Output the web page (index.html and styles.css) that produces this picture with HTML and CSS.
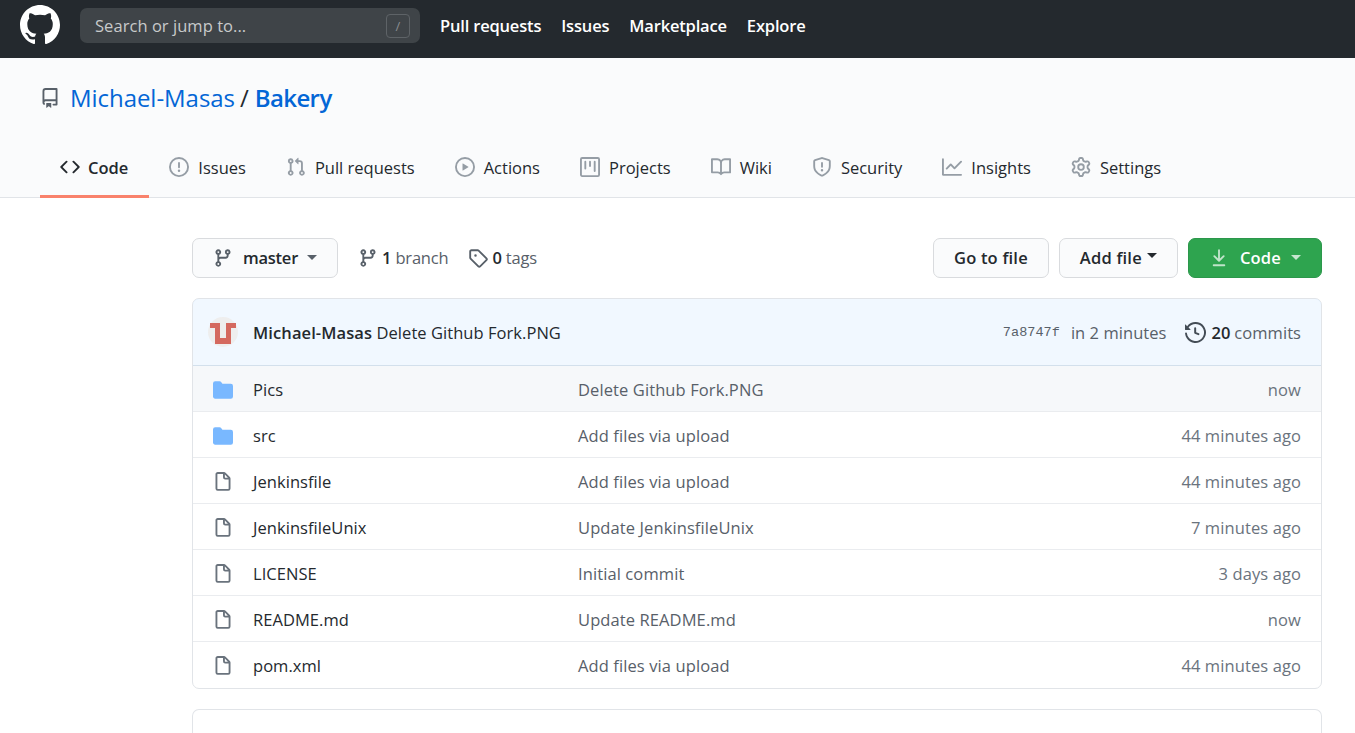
FILE: index.html
```html
<!DOCTYPE html>
<html lang="en">
<head>
    <meta charset="UTF-8">
    <meta name="viewport" content="width=device-width, initial-scale=1.0">
    <title>Michael-Masas/Bakery</title>
    <link rel="stylesheet" href="styles.css">
</head>
<body>

    <header class="topbar">
        <svg class="logo" viewBox="0 0 16 16"><path fill-rule="evenodd" d="M8 0C3.58 0 0 3.58 0 8c0 3.54 2.29 6.53 5.47 7.59.4.07.55-.17.55-.38 0-.19-.01-.82-.01-1.49-2.01.37-2.53-.49-2.69-.94-.09-.23-.48-.94-.82-1.13-.28-.15-.68-.52-.01-.53.63-.01 1.08.58 1.23.82.72 1.21 1.87.87 2.33.66.07-.52.28-.87.51-1.07-1.78-.2-3.64-.89-3.64-3.95 0-.87.31-1.59.82-2.15-.08-.2-.36-1.02.08-2.12 0 0 .67-.21 2.2.82.64-.18 1.32-.27 2-.27.68 0 1.36.09 2 .27 1.53-1.04 2.2-.82 2.2-.82.44 1.1.16 1.92.08 2.12.51.56.82 1.27.82 2.15 0 3.07-1.87 3.75-3.65 3.95.29.25.54.73.54 1.48 0 1.07-.01 1.93-.01 2.2 0 .21.15.46.55.38A8.013 8.013 0 0016 8c0-4.42-3.58-8-8-8z"/></svg>
        <div class="search">
            <span>Search or jump to...</span>
            <kbd class="slash">/</kbd>
        </div>
        <nav class="topnav">
            <a>Pull requests</a>
            <a>Issues</a>
            <a>Marketplace</a>
            <a>Explore</a>
        </nav>
    </header>

    <section class="pagehead">
        <h1 class="repo-title">
            <svg class="icon repo-icon" viewBox="0 0 16 16"><path fill-rule="evenodd" d="M2 2.5A2.5 2.5 0 014.5 0h8.75a.75.75 0 01.75.75v12.5a.75.75 0 01-.75.75h-2.5a.75.75 0 110-1.5h1.75v-2h-8a1 1 0 00-.714 1.7.75.75 0 01-1.072 1.05A2.495 2.495 0 012 11.5v-9zm10.5-1V9h-8c-.356 0-.694.074-1 .208V2.5a1 1 0 011-1h8zM5 12.25v3.25a.25.25 0 00.4.2l1.45-1.087a.25.25 0 01.3 0L8.6 15.7a.25.25 0 00.4-.2v-3.25a.25.25 0 00-.25-.25h-3.5a.25.25 0 00-.25.25z"/></svg>
            <a class="owner">Michael-Masas</a>
            <span class="sep">/</span>
            <a class="name">Bakery</a>
        </h1>
        <nav class="tabs">
            <a class="tab selected"><svg class="icon" viewBox="0 0 16 16"><path fill-rule="evenodd" d="M4.72 3.22a.75.75 0 011.06 1.06L2.06 8l3.72 3.72a.75.75 0 11-1.06 1.06L.47 8.53a.75.75 0 010-1.06l4.25-4.25zm6.56 0a.75.75 0 10-1.06 1.06L13.94 8l-3.72 3.72a.75.75 0 101.06 1.06l4.25-4.25a.75.75 0 000-1.06l-4.25-4.25z"/></svg>Code</a>
            <a class="tab"><svg class="icon" viewBox="0 0 16 16"><path fill-rule="evenodd" d="M8 1.5a6.5 6.5 0 100 13 6.5 6.5 0 000-13zM0 8a8 8 0 1116 0A8 8 0 010 8zm9 3a1 1 0 11-2 0 1 1 0 012 0zm-.25-6.25a.75.75 0 00-1.5 0v3.5a.75.75 0 001.5 0v-3.5z"/></svg>Issues</a>
            <a class="tab"><svg class="icon" viewBox="0 0 16 16"><path fill-rule="evenodd" d="M7.177 3.073L9.573.677A.25.25 0 0110 .854v4.792a.25.25 0 01-.427.177L7.177 3.427a.25.25 0 010-.354zM3.75 2.5a.75.75 0 100 1.5.75.75 0 000-1.5zm-2.25.75a2.25 2.25 0 113 2.122v5.256a2.251 2.251 0 11-1.5 0V5.372A2.25 2.25 0 011.5 3.25zM11 2.5h-1V4h1a1 1 0 011 1v5.628a2.251 2.251 0 101.5 0V5A2.5 2.5 0 0011 2.5zm1 10.25a.75.75 0 111.5 0 .75.75 0 01-1.5 0zM3.75 12a.75.75 0 100 1.5.75.75 0 000-1.5z"/></svg>Pull requests</a>
            <a class="tab"><svg class="icon" viewBox="0 0 16 16"><path fill-rule="evenodd" d="M1.5 8a6.5 6.5 0 1113 0 6.5 6.5 0 01-13 0zM8 0a8 8 0 100 16A8 8 0 008 0zM6.379 5.227A.25.25 0 006 5.442v5.117a.25.25 0 00.379.214l4.264-2.559a.25.25 0 000-.428L6.379 5.227z"/></svg>Actions</a>
            <a class="tab"><svg class="icon" viewBox="0 0 16 16"><path fill-rule="evenodd" d="M1.75 0A1.75 1.75 0 000 1.75v12.5C0 15.216.784 16 1.75 16h12.5A1.75 1.75 0 0016 14.25V1.75A1.75 1.75 0 0014.25 0H1.75zM1.5 1.75a.25.25 0 01.25-.25h12.5a.25.25 0 01.25.25v12.5a.25.25 0 01-.25.25H1.75a.25.25 0 01-.25-.25V1.75zM11.75 3a.75.75 0 00-.75.75v7.5a.75.75 0 001.5 0v-7.5a.75.75 0 00-.75-.75zm-8.25.75a.75.75 0 011.5 0v5.5a.75.75 0 01-1.5 0v-5.5zM8 3a.75.75 0 00-.75.75v3.5a.75.75 0 001.5 0v-3.5A.75.75 0 008 3z"/></svg>Projects</a>
            <a class="tab"><svg class="icon" viewBox="0 0 16 16"><path fill-rule="evenodd" d="M0 1.75A.75.75 0 01.75 1h4.253c1.227 0 2.317.59 3 1.501A3.744 3.744 0 0111.006 1h4.245a.75.75 0 01.75.75v10.5a.75.75 0 01-.75.75h-4.507a2.25 2.25 0 00-1.591.659l-.622.621a.75.75 0 01-1.06 0l-.622-.621A2.25 2.25 0 005.258 13H.75a.75.75 0 01-.75-.75V1.75zm8.755 3a2.25 2.25 0 012.25-2.25H14.5v9h-3.757c-.71 0-1.4.201-1.992.572l.004-7.322zm-1.504 7.324l.004-5.073-.002-2.253A2.25 2.25 0 005.003 2.5H1.5v9h3.757a3.75 3.75 0 011.994.574z"/></svg>Wiki</a>
            <a class="tab"><svg class="icon" viewBox="0 0 16 16"><path fill-rule="evenodd" d="M7.467.133a1.75 1.75 0 011.066 0l5.25 1.68A1.75 1.75 0 0115 3.48V7c0 1.566-.32 3.182-1.303 4.682-.983 1.498-2.585 2.813-5.032 3.855a1.7 1.7 0 01-1.33 0c-2.447-1.042-4.049-2.357-5.032-3.855C1.32 10.182 1 8.566 1 7V3.48a1.75 1.75 0 011.217-1.667l5.25-1.68zm.61 1.429a.25.25 0 00-.153 0l-5.25 1.68a.25.25 0 00-.174.238V7c0 1.358.275 2.666 1.057 3.86.784 1.194 2.121 2.34 4.366 3.297a.2.2 0 00.154 0c2.245-.956 3.582-2.104 4.366-3.298C13.225 9.666 13.5 8.36 13.5 7V3.48a.25.25 0 00-.174-.237l-5.25-1.68zM9 10.5a1 1 0 11-2 0 1 1 0 012 0zm-.25-5.75a.75.75 0 10-1.5 0v3a.75.75 0 001.5 0v-3z"/></svg>Security</a>
            <a class="tab"><svg class="icon" viewBox="0 0 16 16"><path fill-rule="evenodd" d="M1.5 1.75a.75.75 0 00-1.5 0v12.5c0 .414.336.75.75.75h14.5a.75.75 0 000-1.5H1.5V1.75zm14.28 2.53a.75.75 0 00-1.06-1.06L10 7.94 7.53 5.47a.75.75 0 00-1.06 0L3.22 8.72a.75.75 0 001.06 1.06L7 7.06l2.47 2.47a.75.75 0 001.06 0l5.25-5.25z"/></svg>Insights</a>
            <a class="tab"><svg class="icon" viewBox="0 0 16 16"><path fill-rule="evenodd" d="M7.429 1.525a6.593 6.593 0 011.142 0c.036.003.108.036.137.146l.289 1.105c.147.56.55.967.997 1.189.174.086.341.183.501.29.417.278.97.423 1.53.27l1.102-.303c.11-.03.175.016.195.046.219.31.41.641.573.989.014.031.022.11-.059.19l-.815.806c-.411.406-.562.957-.53 1.456a4.588 4.588 0 010 .582c-.032.499.119 1.05.53 1.456l.815.806c.08.08.073.159.059.19a6.494 6.494 0 01-.573.99c-.02.029-.086.074-.195.045l-1.103-.303c-.559-.153-1.112-.008-1.529.27-.16.107-.327.204-.5.29-.449.222-.851.628-.998 1.189l-.289 1.105c-.029.11-.101.143-.137.146a6.613 6.613 0 01-1.142 0c-.036-.003-.108-.037-.137-.146l-.289-1.105c-.147-.56-.55-.967-.997-1.189a4.502 4.502 0 01-.501-.29c-.417-.278-.97-.423-1.53-.27l-1.102.303c-.11.03-.175-.016-.195-.046a6.492 6.492 0 01-.573-.989c-.014-.031-.022-.11.059-.19l.815-.806c.411-.406.562-.957.53-1.456a4.587 4.587 0 010-.582c.032-.499-.119-1.05-.53-1.456l-.815-.806c-.08-.08-.073-.159-.059-.19a6.44 6.44 0 01.573-.99c.02-.029.086-.075.195-.045l1.103.303c.559.153 1.112.008 1.529-.27.16-.107.327-.204.5-.29.449-.222.851-.628.998-1.189l.289-1.105c.029-.11.101-.143.137-.146zM8 0c-.236 0-.47.01-.701.03-.743.065-1.29.615-1.458 1.261l-.29 1.106c-.017.066-.078.158-.211.224a5.994 5.994 0 00-.668.386c-.123.082-.233.09-.3.071L3.27 2.776c-.644-.177-1.392.02-1.82.63a7.977 7.977 0 00-.704 1.217c-.315.675-.111 1.422.363 1.891l.815.806c.05.048.098.147.088.294a6.084 6.084 0 000 .772c.01.147-.038.246-.088.294l-.815.806c-.474.469-.678 1.216-.363 1.891.2.428.436.835.704 1.218.428.609 1.176.806 1.82.63l1.103-.303c.066-.019.176-.011.299.071.213.143.436.272.668.386.133.066.194.158.212.224l.289 1.106c.169.646.715 1.196 1.458 1.26a8.094 8.094 0 001.402 0c.743-.064 1.29-.614 1.458-1.26l.29-1.106c.017-.066.078-.158.211-.224a5.98 5.98 0 00.668-.386c.123-.082.233-.09.3-.071l1.102.302c.644.177 1.392-.02 1.82-.63.268-.382.505-.789.704-1.217.315-.675.111-1.422-.364-1.891l-.814-.806c-.05-.048-.098-.147-.088-.294a6.1 6.1 0 000-.772c-.01-.147.039-.246.088-.294l.814-.806c.475-.469.679-1.216.364-1.891a7.992 7.992 0 00-.704-1.218c-.428-.609-1.176-.806-1.82-.63l-1.103.303c-.066.019-.176.011-.299-.071a5.991 5.991 0 00-.668-.386c-.133-.066-.194-.158-.212-.224L10.16 1.29C9.99.645 9.444.095 8.701.031A8.094 8.094 0 008 0zm1.5 8a1.5 1.5 0 11-3 0 1.5 1.5 0 013 0zM11 8a3 3 0 11-6 0 3 3 0 016 0z"/></svg>Settings</a>
        </nav>
    </section>

    <main class="content">
        <div class="toolbar">
            <button class="btn branch-btn">
                <svg class="icon" viewBox="0 0 16 16"><path fill-rule="evenodd" d="M11.75 2.5a.75.75 0 100 1.5.75.75 0 000-1.5zm-2.25.75a2.25 2.25 0 113 2.122V6A2.5 2.5 0 0110 8.5H6a1 1 0 00-1 1v1.128a2.251 2.251 0 11-1.5 0V5.372a2.25 2.25 0 111.5 0v1.836A2.492 2.492 0 016 7h4a1 1 0 001-1v-.628A2.25 2.25 0 019.5 3.25zM4.25 12a.75.75 0 100 1.5.75.75 0 000-1.5zM3.5 3.25a.75.75 0 111.5 0 .75.75 0 01-1.5 0z"/></svg>
                <span>master</span>
                <i class="caret"></i>
            </button>
            <a class="meta-link"><svg class="icon" viewBox="0 0 16 16"><path fill-rule="evenodd" d="M11.75 2.5a.75.75 0 100 1.5.75.75 0 000-1.5zm-2.25.75a2.25 2.25 0 113 2.122V6A2.5 2.5 0 0110 8.5H6a1 1 0 00-1 1v1.128a2.251 2.251 0 11-1.5 0V5.372a2.25 2.25 0 111.5 0v1.836A2.492 2.492 0 016 7h4a1 1 0 001-1v-.628A2.25 2.25 0 019.5 3.25zM4.25 12a.75.75 0 100 1.5.75.75 0 000-1.5zM3.5 3.25a.75.75 0 111.5 0 .75.75 0 01-1.5 0z"/></svg><b>1</b> branch</a>
            <a class="meta-link"><svg class="icon" viewBox="0 0 16 16"><path fill-rule="evenodd" d="M2.5 7.775V2.75a.25.25 0 01.25-.25h5.025a.25.25 0 01.177.073l6.25 6.25a.25.25 0 010 .354l-5.025 5.025a.25.25 0 01-.354 0l-6.25-6.25a.25.25 0 01-.073-.177zm-1.5 0V2.75C1 1.784 1.784 1 2.75 1h5.025c.464 0 .91.184 1.238.513l6.25 6.25a1.75 1.75 0 010 2.474l-5.026 5.026a1.75 1.75 0 01-2.474 0l-6.25-6.25A1.75 1.75 0 011 7.775zM6 5a1 1 0 100 2 1 1 0 000-2z"/></svg><b>0</b> tags</a>
            <div class="toolbar-right">
                <button class="btn wide">Go to file</button>
                <button class="btn wide">Add file<i class="caret small"></i></button>
                <button class="btn wide primary">
                    <svg class="icon" viewBox="0 0 16 16"><path fill-rule="evenodd" d="M7.47 10.78a.75.75 0 001.06 0l3.75-3.75a.75.75 0 00-1.06-1.06L8.75 8.44V1.75a.75.75 0 00-1.5 0v6.69L4.78 5.97a.75.75 0 00-1.06 1.06l3.75 3.75zM3.75 13a.75.75 0 000 1.5h8.5a.75.75 0 000-1.5h-8.5z"/></svg>
                    <span>Code</span>
                    <i class="caret"></i>
                </button>
            </div>
        </div>

        <div class="files">
            <div class="commit-bar">
                <svg class="avatar" viewBox="0 0 30 30"><circle cx="15" cy="15" r="15" fill="#eeeeee"/><path fill="#d4695f" d="M2 6h10v15h6V6h10v5h-5v16H7V11H2z"/></svg>
                <span class="commit-msg"><b>Michael-Masas</b> Delete Github Fork.PNG</span>
                <code class="sha">7a8747f</code>
                <span class="commit-time">in 2 minutes</span>
                <span class="commits"><svg class="icon" viewBox="0 0 16 16"><path fill-rule="evenodd" d="M1.643 3.143L.427 1.927A.25.25 0 000 2.104V5.75c0 .138.112.25.25.25h3.646a.25.25 0 00.177-.427L2.715 4.215a6.5 6.5 0 11-1.18 4.458.75.75 0 10-1.493.154 8.001 8.001 0 101.6-5.684zM7.75 4a.75.75 0 01.75.75v2.992l2.028.812a.75.75 0 01-.557 1.392l-2.5-1A.75.75 0 017 8.25v-3.5A.75.75 0 017.75 4z"/></svg><b>20</b> commits</span>
            </div>
            <div class="row hover">
                <svg class="icon folder" viewBox="0 0 16 16"><path d="M1.75 1A1.75 1.75 0 000 2.75v10.5C0 14.216.784 15 1.75 15h12.5A1.75 1.75 0 0016 13.25v-8.5A1.75 1.75 0 0014.25 3h-6.5a.25.25 0 01-.2-.1l-.9-1.2c-.33-.44-.85-.7-1.4-.7h-3.5z"/></svg>
                <a class="fname">Pics</a><a class="fmsg">Delete Github Fork.PNG</a><span class="ftime">now</span>
            </div>
            <div class="row">
                <svg class="icon folder" viewBox="0 0 16 16"><path d="M1.75 1A1.75 1.75 0 000 2.75v10.5C0 14.216.784 15 1.75 15h12.5A1.75 1.75 0 0016 13.25v-8.5A1.75 1.75 0 0014.25 3h-6.5a.25.25 0 01-.2-.1l-.9-1.2c-.33-.44-.85-.7-1.4-.7h-3.5z"/></svg>
                <a class="fname">src</a><a class="fmsg">Add files via upload</a><span class="ftime">44 minutes ago</span>
            </div>
            <div class="row">
                <svg class="icon file" viewBox="0 0 16 16"><path fill-rule="evenodd" d="M3.75 1.5a.25.25 0 00-.25.25v11.5c0 .138.112.25.25.25h8.5a.25.25 0 00.25-.25V6H9.75A1.75 1.75 0 018 4.25V1.5H3.75zm5.75.56v2.19c0 .138.112.25.25.25h2.19L9.5 2.06zM2 1.75C2 .784 2.784 0 3.75 0h5.086c.464 0 .909.184 1.237.513l3.414 3.414c.329.328.513.773.513 1.237v8.086A1.75 1.75 0 0112.25 15h-8.5A1.75 1.75 0 012 13.25V1.75z"/></svg>
                <a class="fname">Jenkinsfile</a><a class="fmsg">Add files via upload</a><span class="ftime">44 minutes ago</span>
            </div>
            <div class="row">
                <svg class="icon file" viewBox="0 0 16 16"><path fill-rule="evenodd" d="M3.75 1.5a.25.25 0 00-.25.25v11.5c0 .138.112.25.25.25h8.5a.25.25 0 00.25-.25V6H9.75A1.75 1.75 0 018 4.25V1.5H3.75zm5.75.56v2.19c0 .138.112.25.25.25h2.19L9.5 2.06zM2 1.75C2 .784 2.784 0 3.75 0h5.086c.464 0 .909.184 1.237.513l3.414 3.414c.329.328.513.773.513 1.237v8.086A1.75 1.75 0 0112.25 15h-8.5A1.75 1.75 0 012 13.25V1.75z"/></svg>
                <a class="fname">JenkinsfileUnix</a><a class="fmsg">Update JenkinsfileUnix</a><span class="ftime">7 minutes ago</span>
            </div>
            <div class="row">
                <svg class="icon file" viewBox="0 0 16 16"><path fill-rule="evenodd" d="M3.75 1.5a.25.25 0 00-.25.25v11.5c0 .138.112.25.25.25h8.5a.25.25 0 00.25-.25V6H9.75A1.75 1.75 0 018 4.25V1.5H3.75zm5.75.56v2.19c0 .138.112.25.25.25h2.19L9.5 2.06zM2 1.75C2 .784 2.784 0 3.75 0h5.086c.464 0 .909.184 1.237.513l3.414 3.414c.329.328.513.773.513 1.237v8.086A1.75 1.75 0 0112.25 15h-8.5A1.75 1.75 0 012 13.25V1.75z"/></svg>
                <a class="fname">LICENSE</a><a class="fmsg">Initial commit</a><span class="ftime">3 days ago</span>
            </div>
            <div class="row">
                <svg class="icon file" viewBox="0 0 16 16"><path fill-rule="evenodd" d="M3.75 1.5a.25.25 0 00-.25.25v11.5c0 .138.112.25.25.25h8.5a.25.25 0 00.25-.25V6H9.75A1.75 1.75 0 018 4.25V1.5H3.75zm5.75.56v2.19c0 .138.112.25.25.25h2.19L9.5 2.06zM2 1.75C2 .784 2.784 0 3.75 0h5.086c.464 0 .909.184 1.237.513l3.414 3.414c.329.328.513.773.513 1.237v8.086A1.75 1.75 0 0112.25 15h-8.5A1.75 1.75 0 012 13.25V1.75z"/></svg>
                <a class="fname">README.md</a><a class="fmsg">Update README.md</a><span class="ftime">now</span>
            </div>
            <div class="row last">
                <svg class="icon file" viewBox="0 0 16 16"><path fill-rule="evenodd" d="M3.75 1.5a.25.25 0 00-.25.25v11.5c0 .138.112.25.25.25h8.5a.25.25 0 00.25-.25V6H9.75A1.75 1.75 0 018 4.25V1.5H3.75zm5.75.56v2.19c0 .138.112.25.25.25h2.19L9.5 2.06zM2 1.75C2 .784 2.784 0 3.75 0h5.086c.464 0 .909.184 1.237.513l3.414 3.414c.329.328.513.773.513 1.237v8.086A1.75 1.75 0 0112.25 15h-8.5A1.75 1.75 0 012 13.25V1.75z"/></svg>
                <a class="fname">pom.xml</a><a class="fmsg">Add files via upload</a><span class="ftime">44 minutes ago</span>
            </div>
        </div>

        <div class="readme"></div>
    </main>

</body>
</html>
```

FILE: styles.css
```css
html, body {
    height: 733px;
    overflow: hidden;
}

body {
    margin: 0;
    font-family: "Open Sans", "Noto Sans", sans-serif;
    font-size: 16.5px;
    letter-spacing: 0.05px;
    color: #24292e;
    background: #fff;
}

.icon {
    width: 20px;
    height: 20px;
    flex: none;
    fill: currentColor;
}

b {
    font-weight: 600;
    letter-spacing: 0;
}

/* top bar */
.topbar {
    display: flex;
    align-items: flex-start;
    height: 58px;
    box-sizing: border-box;
    padding: 8px 20px 0;
    background: #24292e;
    color: #fff;
}

.logo {
    width: 40px;
    height: 40px;
    margin: -3px 20px 0 0;
    fill: #fff;
}

.search {
    display: flex;
    align-items: center;
    justify-content: space-between;
    width: 340px;
    height: 35px;
    box-sizing: border-box;
    padding: 0 10px 0 15px;
    background: #3f4448;
    border-radius: 7px;
    color: #c8cacb;
}

.slash {
    width: 24px;
    height: 24px;
    box-sizing: border-box;
    border: 1px solid #5e6367;
    border-radius: 4px;
    font: 13px/22px "Open Sans", sans-serif;
    text-align: center;
    color: #8a8e91;
}

.topnav {
    display: flex;
    gap: 20px;
    margin-left: 20px;
    height: 35px;
    align-items: center;
    font-weight: 600;
    letter-spacing: -0.18px;
}

/* repo header */
.pagehead {
    height: 140px;
    box-sizing: border-box;
    padding: 22px 0 0 40px;
    background: #fafbfc;
    border-bottom: 1px solid #e1e4e8;
}

.repo-title {
    display: flex;
    align-items: center;
    height: 35px;
    margin: 0 0 32px;
    font-size: 24px;
    font-weight: 400;
    letter-spacing: -0.05px;
}

.repo-icon {
    color: #586069;
    margin-right: 10px;
}

.owner, .name {
    color: #0366d6;
}

.sep {
    margin: 0 6px 0 5px;
}

.name {
    font-weight: 600;
    letter-spacing: -0.6px;
}

.tabs {
    display: flex;
    height: 51px;
}

.tab {
    display: flex;
    align-items: center;
    gap: 9px;
    height: 51px;
    box-sizing: border-box;
    padding: 0 20px 8px;
    border-bottom: 3px solid transparent;
    letter-spacing: 0;
}

.tab .icon {
    color: #959da5;
}

.tab.selected {
    gap: 8px;
    padding-right: 21px;
    font-weight: 600;
    border-bottom-color: #f9826c;
}

.tab.selected .icon {
    color: #24292e;
}

/* main column */
.content {
    width: 1130px;
    margin-left: 192px;
    padding-top: 40px;
}

.toolbar {
    display: flex;
    align-items: center;
    height: 40px;
    margin-bottom: 20px;
}

.btn {
    display: flex;
    align-items: center;
    height: 40px;
    box-sizing: border-box;
    padding: 0 20px 1px;
    font: inherit;
    font-weight: 600;
    letter-spacing: -0.25px;
    color: #24292e;
    background: #fafbfc;
    border: 1px solid #d9dbde;
    border-radius: 7px;
    white-space: nowrap;
}

.btn.wide {
    letter-spacing: 0.2px;
}

.branch-btn {
    gap: 10px;
    width: 146px;
}

.branch-btn .icon {
    color: #586069;
}

.branch-btn .caret {
    margin-left: -1px;
}

.caret {
    width: 0;
    height: 0;
    margin-left: 1px;
    border: 5px solid transparent;
    border-top-color: #586069;
    border-bottom-width: 0;
}

.caret.small {
    margin-left: 5px;
    margin-top: -5px;
    border-top-color: #24292e;
}

.meta-link {
    display: flex;
    align-items: center;
    margin-left: 20px;
    padding-bottom: 1px;
    color: #586069;
    letter-spacing: -0.2px;
}

.meta-link .icon {
    margin-right: 4px;
}

.meta-link b {
    color: #24292e;
    margin-right: 4px;
}

.toolbar-right {
    display: flex;
    gap: 10px;
    margin-left: auto;
}

.btn.primary {
    gap: 9px;
    color: #fff;
    background: #2ea44f;
    border-color: #2c974b;
}

.btn.primary .icon {
    margin-right: 2px;
    color: rgba(255, 255, 255, 0.7);
}

.btn.primary .caret {
    border-top-color: #c6e6cf;
}

/* file table */
.files {
    border: 1px solid #e1e4e8;
    border-radius: 7px;
    overflow: hidden;
}

.commit-bar {
    display: flex;
    align-items: center;
    height: 68px;
    box-sizing: border-box;
    padding: 0 20px 0 15px;
    background: #f1f8ff;
    border: 1px solid #c8e1ff;
    border-bottom-color: #d3e0ec;
    margin: -1px -1px 0;
    border-radius: 7px 7px 0 0;
}

.avatar {
    width: 30px;
    height: 30px;
    flex: none;
    margin-right: 15px;
}

.commit-msg {
    margin-right: auto;
}

.commit-msg b {
    letter-spacing: 0.1px;
}

.sha {
    font: 13.5px "Liberation Mono", monospace;
    color: #586069;
    margin-right: 11px;
}

.commit-time {
    color: #586069;
    margin-right: 19px;
}

.commits {
    display: flex;
    align-items: center;
    color: #586069;
}

.commits .icon {
    color: #444d56;
    margin-right: 5px;
    width: 21px;
    height: 21px;
}

.commits b {
    color: #24292e;
    margin-right: 4px;
}

.row {
    display: flex;
    align-items: center;
    height: 46px;
    box-sizing: border-box;
    padding: 2px 20px 0;
    border-top: 1px solid #eaecef;
}

.commit-bar + .row {
    border-top: 0;
    height: 45px;
}

.row.last {
    height: 47px;
    padding-bottom: 1px;
}

.row.hover {
    background: #f6f8fa;
}

.row .icon {
    margin-right: 20px;
}

.folder {
    color: #79b8ff;
}

.file {
    color: #6a737d;
}

.fname {
    width: 325px;
}

.fmsg {
    color: #586069;
    letter-spacing: 0.1px;
}

.ftime {
    margin-left: auto;
    color: #6a737d;
    letter-spacing: 0.1px;
}

/* only the top of the next box is in the window */
.readme {
    height: 23px;
    margin-top: 20px;
    border: 1px solid #e1e4e8;
    border-bottom: 0;
    border-radius: 7px 7px 0 0;
}
```
